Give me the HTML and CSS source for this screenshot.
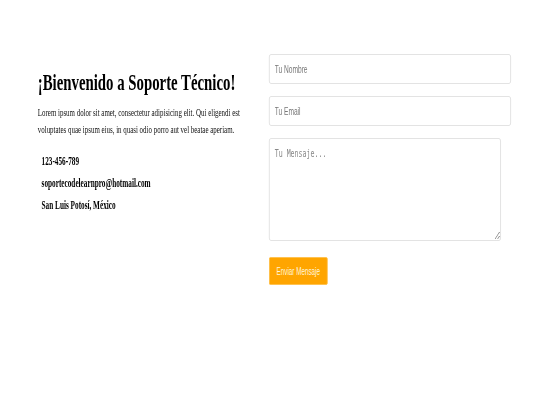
FILE: index.html
```html
<!DOCTYPE html>
<html>
    <head>
        <title>Soporte Técnico</title>
        <link rel="stylesheet" href="styles.css">
    </head>
    <body>
        <div class="frame">
            <div class="page">
                <div class="info">
                    <h1>¡Bienvenido a Soporte Técnico!</h1>
                    <p class="intro">Lorem ipsum dolor sit amet, consectetur adipisicing elit. Qui eligendi est voluptates quae ipsum eius, in quasi odio porro aut vel beatae aperiam.</p>
                    <ul class="contact">
                        <li>123-456-789</li>
                        <li>soportecodelearnpro@hotmail.com</li>
                        <li>San Luis Potosí, México</li>
                    </ul>
                </div>
                <form class="form" onsubmit="return false;">
                    <input type="text" class="field" placeholder="Tu Nombre">
                    <input type="email" class="field" placeholder="Tu Email">
                    <textarea class="message" placeholder="Tu Mensaje..."></textarea>
                    <button type="submit" class="send">Enviar Mensaje</button>
                </form>
            </div>
        </div>
    </body>
</html>
```

FILE: styles.css
```css
html, body {
    margin: 0;
    padding: 0;
    background: #fff;
}
.frame {
    width: 540px;
    height: 405px;
    overflow: hidden;
}
.page {
    width: 857px;
    box-sizing: border-box;
    padding: 54px 46px 0 60px;
    display: grid;
    grid-template-columns: 345px 384px;
    column-gap: 22px;
    align-items: start;
    transform: scaleX(0.63);
    transform-origin: 0 0;
    font-family: "Liberation Serif", serif;
    color: #111;
}
.info h1 {
    margin: 15px 0 9px 0;
    font-size: 23.5px;
    line-height: 26px;
    font-weight: bold;
    color: #000;
}
.intro {
    margin: 0;
    font-size: 11px;
    line-height: 17px;
    color: #111;
}
.contact {
    list-style: none;
    margin: 12px 0 0 0;
    padding: 0 0 0 6px;
}
.contact li {
    font-size: 11.5px;
    line-height: 22px;
    font-weight: bold;
    color: #000;
}
.form {
    display: flex;
    flex-direction: column;
    align-items: flex-start;
}
.field {
    width: 100%;
    height: 30px;
    box-sizing: border-box;
    margin: 0 0 12px 0;
    padding: 0 8px;
    border: 1px solid #dcdcdc;
    border-radius: 3px;
    font-family: "Liberation Sans", sans-serif;
    font-size: 10.5px;
    color: #333;
    outline: none;
}
.field::placeholder {
    color: #777;
}
.message {
    width: 368px;
    height: 103px;
    box-sizing: border-box;
    margin: 0 0 16px 0;
    padding: 8px;
    border: 1px solid #dcdcdc;
    border-radius: 3px;
    font-family: "DejaVu Sans Mono", monospace;
    font-size: 10.5px;
    color: #333;
    outline: none;
}
.message::placeholder {
    color: #888;
}
.send {
    height: 28px;
    padding: 0 11px;
    border: 1px solid #ffbf45;
    border-radius: 2px;
    background: #ffa500;
    color: #fff6dc;
    font-family: "Liberation Sans", sans-serif;
    font-size: 10px;
    cursor: pointer;
}
```
